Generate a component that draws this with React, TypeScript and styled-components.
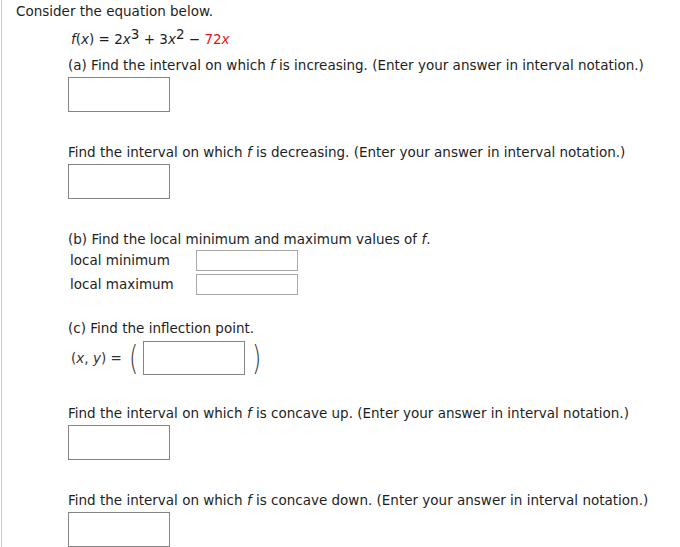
import React from "react";
import styled, { createGlobalStyle } from "styled-components";

const Global = createGlobalStyle`
  html, body { margin: 0; padding: 0; background: #fff; }
  body { font-family: Verdana, "DejaVu Sans", sans-serif; font-size: 13.5px; color: #1e1e1e; }
`;

const Page = styled.div`
  margin-left: 1px;
  border-left: 1px solid #cfcfcf;
  min-height: 547px;
  padding: 2px 0 0 14px;
  box-sizing: border-box;
`;

const Line = styled.div<{ $mt?: number }>`
  line-height: 18px;
  height: 16px;
  margin-top: ${(p) => p.$mt ?? 0}px;
  white-space: nowrap;
`;

const Indent = styled.div`
  margin-left: 52px;
`;

const Equation = styled(Line)`
  padding-left: 3px;
`;

const Sup = styled.span`
  position: relative;
  top: -5px;
`;

const Red = styled.span`
  color: #e0141e;
`;

const Answer = styled.div<{ $mt?: number }>`
  width: 102px;
  height: 35px;
  box-sizing: border-box;
  border: 1px solid #858585;
  margin-top: ${(p) => p.$mt ?? 0}px;
  background: #fff;
`;

const ValueRow = styled.div<{ $mt?: number }>`
  display: flex;
  align-items: center;
  height: 20px;
  margin-top: ${(p) => p.$mt ?? 0}px;
  padding-left: 2px;
`;

const ValueLabel = styled.span`
  width: 126px;
`;

const SmallAnswer = styled.div`
  width: 102px;
  height: 21px;
  box-sizing: border-box;
  border: 1px solid #a9a9a9;
`;

const PointRow = styled.div<{ $mt?: number }>`
  display: flex;
  align-items: center;
  height: 34px;
  margin-top: ${(p) => p.$mt ?? 0}px;
  padding-left: 3px;
`;

const PointLabel = styled.span`
  color: #333;
`;

const Paren = styled.span<{ $side: "l" | "r" }>`
  font-size: 34px;
  line-height: 34px;
  font-weight: 200;
  color: #3a3a3a;
  transform: scaleX(0.7);
  margin: ${(p) => (p.$side === "l" ? "0 3px 0 5px" : "0 0 0 5px")};
  font-family: "DejaVu Sans", sans-serif;
`;

const PointAnswer = styled(Answer)`
  height: 34px;
`;

export default function App() {
  return (
    <>
      <Global />
      <Page>
        <Line>Consider the equation below.</Line>
        <Indent>
          <Equation $mt={12}>
            <i>f</i>(<i>x</i>) = 2<i>x</i>
            <Sup>3</Sup> + 3<i>x</i>
            <Sup>2</Sup> − <Red>72<i>x</i></Red>
          </Equation>
          <Line $mt={10}>
            (a) Find the interval on which <i>f</i> is increasing. (Enter your answer in interval notation.)
          </Line>
          <Answer $mt={5} />
          <Line $mt={31}>
            Find the interval on which <i>f</i> is decreasing. (Enter your answer in interval notation.)
          </Line>
          <Answer $mt={5} />
          <Line $mt={31}>
            (b) Find the local minimum and maximum values of <i>f</i>.
          </Line>
          <ValueRow $mt={4}>
            <ValueLabel>local minimum</ValueLabel>
            <SmallAnswer />
          </ValueRow>
          <ValueRow $mt={4}>
            <ValueLabel>local maximum</ValueLabel>
            <SmallAnswer />
          </ValueRow>
          <Line $mt={25}>(c) Find the inflection point.</Line>
          <PointRow $mt={6}>
            <PointLabel>
              (<i>x</i>, <i>y</i>) =
            </PointLabel>
            <Paren $side="l">(</Paren>
            <PointAnswer />
            <Paren $side="r">)</Paren>
          </PointRow>
          <Line $mt={29}>
            Find the interval on which <i>f</i> is concave up. (Enter your answer in interval notation.)
          </Line>
          <Answer $mt={5} />
          <Line $mt={31}>
            Find the interval on which <i>f</i> is concave down. (Enter your answer in interval notation.)
          </Line>
          <Answer $mt={5} />
        </Indent>
      </Page>
    </>
  );
}
